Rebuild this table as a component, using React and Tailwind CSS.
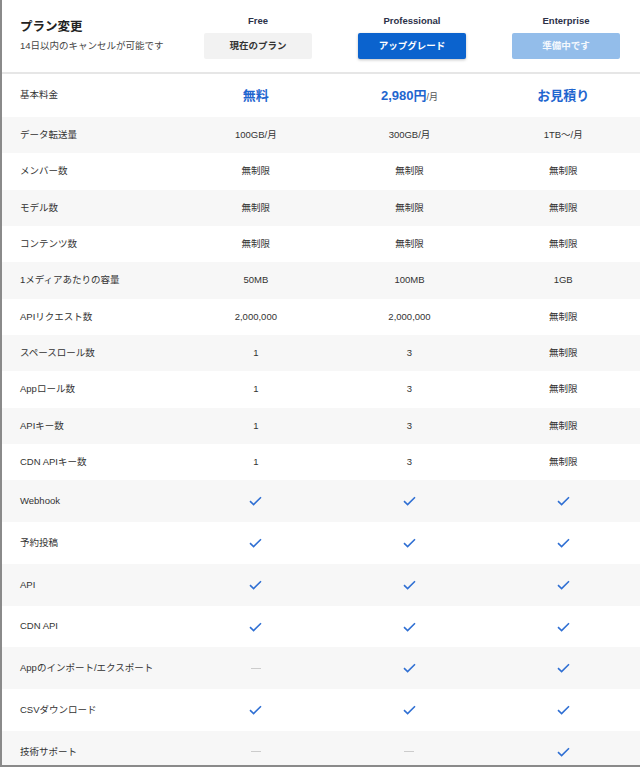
const FONT = { fontFamily: '"Liberation Sans", "Noto Sans CJK JP", sans-serif' };

// Plain rows: label + three plan values.
const PLAIN_ROWS = [
  ["データ転送量", "100GB/月", "300GB/月", "1TB～/月"],
  ["メンバー数", "無制限", "無制限", "無制限"],
  ["モデル数", "無制限", "無制限", "無制限"],
  ["コンテンツ数", "無制限", "無制限", "無制限"],
  ["1メディアあたりの容量", "50MB", "100MB", "1GB"],
  ["APIリクエスト数", "2,000,000", "2,000,000", "無制限"],
  ["スペースロール数", "1", "3", "無制限"],
  ["Appロール数", "1", "3", "無制限"],
  ["APIキー数", "1", "3", "無制限"],
  ["CDN APIキー数", "1", "3", "無制限"],
];

// Feature rows: true = check, false = dash.
const FEATURE_ROWS = [
  ["Webhook", true, true, true],
  ["予約投稿", true, true, true],
  ["API", true, true, true],
  ["CDN API", true, true, true],
  ["Appのインポート/エクスポート", false, true, true],
  ["CSVダウンロード", true, true, true],
  ["技術サポート", false, false, true],
];

const PLANS = [
  ["Free", "現在のプラン", "bg-[#f2f2f2] text-[#333]"],
  ["Professional", "アップグレード", "bg-[#0b63ce] text-white shadow-[0_1px_3px_rgba(0,0,0,0.25)]"],
  ["Enterprise", "準備中です", "bg-[#93bdea] text-white/90"],
];

const Check = () => (
  <svg width="13" height="10" viewBox="0 0 13 10" fill="none" aria-hidden="true">
    <path d="M1 5.2 L4.6 8.6 L12 1.2" stroke="#2f6fd3" strokeWidth="1.6" />
  </svg>
);

const Dash = () => <span className="block h-px w-[10px] bg-[#cccccc]" />;

const Row = ({ index, height, label, cells }) => (
  <div
    className={`grid grid-cols-[177px_1fr_1fr_1fr] items-center ${height} ${
      index % 2 === 1 ? "bg-[#f7f7f7]" : "bg-white"
    }`}
  >
    <span className="pl-[18px] text-[9.5px] text-[#333]">{label}</span>
    {cells.map((cell, i) => (
      <div key={i} className="flex justify-center text-[9.5px] text-[#333]">
        {cell}
      </div>
    ))}
  </div>
);

const App = () => {
  return (
    <div
      className="h-[767px] w-[640px] overflow-hidden border-b-2 border-l-2 border-[#8a8a8a] bg-white"
      style={FONT}
    >
      {/* Header: title + plan columns with action buttons */}
      <div className="grid h-[74px] grid-cols-[179px_154px_154px_154px] border-b-2 border-[#e6e6e6]">
        <div className="flex flex-col pl-[18px] pt-[19px]">
          <span className="text-[12.5px] font-bold leading-[17px] text-[#222]">プラン変更</span>
          <span className="mt-[3px] text-[9.5px] leading-[13px] text-[#444]">
            14日以内のキャンセルが可能です
          </span>
        </div>
        {PLANS.map(([name, action, style]) => (
          <div key={name} className="flex flex-col items-center pt-[15px]">
            <span className="text-[9.5px] font-bold leading-[12px] text-[#2c3148]">{name}</span>
            <button
              className={`mt-[6px] flex h-[26px] w-[108px] items-center justify-center rounded-[2px] text-[9.5px] font-bold ${style}`}
            >
              {action}
            </button>
          </div>
        ))}
      </div>

      {/* Base price */}
      <div className="grid h-[43px] grid-cols-[177px_1fr_1fr_1fr] items-center bg-white">
        <span className="pl-[18px] text-[9.5px] text-[#333]">基本料金</span>
        <div className="flex justify-center text-[13px] font-bold text-[#1f66cf]">無料</div>
        <div className="flex items-baseline justify-center text-[13px] font-bold text-[#1f66cf]">
          2,980円<span className="text-[9px] font-normal text-[#555]">/月</span>
        </div>
        <div className="flex justify-center text-[13px] font-bold text-[#1f66cf]">お見積り</div>
      </div>

      {PLAIN_ROWS.map(([label, ...cells], i) => (
        <Row key={label} index={i + 1} height="h-[36.33px]" label={label} cells={cells} />
      ))}

      {FEATURE_ROWS.map(([label, ...flags], i) => (
        <Row
          key={label}
          index={i + 11}
          height="h-[41.8px]"
          label={label}
          cells={flags.map((f) => (f ? <Check /> : <Dash />))}
        />
      ))}
    </div>
  );
};

export default App;
